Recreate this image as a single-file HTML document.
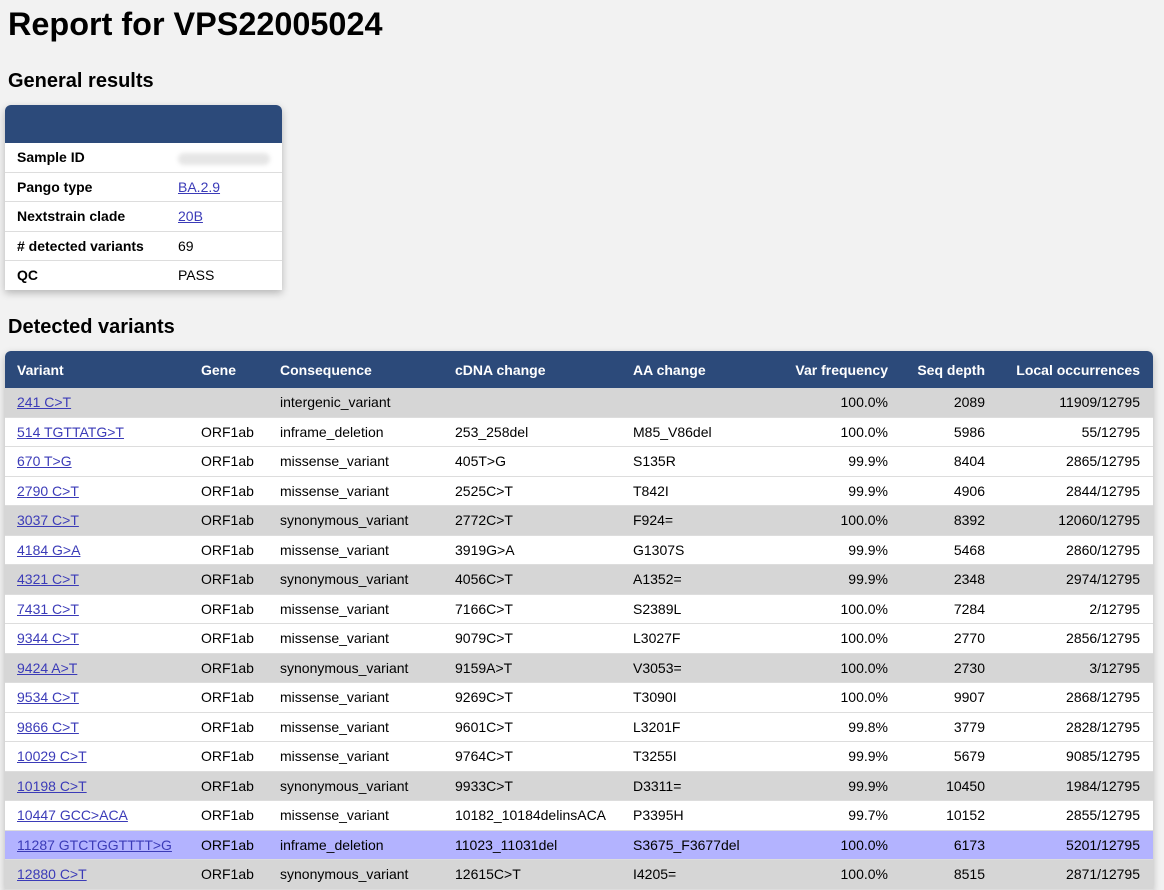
<!DOCTYPE html>
<html><head><meta charset="utf-8"><style>
body{margin:0;background:#f2f2f2;font-family:"Liberation Sans",Arial,sans-serif;font-size:14px;color:#000;width:1164px;height:872px;overflow:hidden}
h1{position:absolute;left:8px;top:6px;margin:0;font-size:32.4px;font-weight:bold}
h2{position:absolute;left:8px;margin:0;font-size:20px;font-weight:bold}
a{color:#3b3bb8}
.card{position:absolute;left:5px;top:105px;width:277px;background:#fff;border-radius:6px 6px 0 0;box-shadow:0 3px 8px rgba(0,0,0,.25);overflow:hidden}
.card .hd{height:38px;background:#2c4a7a}
.card table{border-collapse:collapse;width:100%}
.card td{height:28.5px;padding:0 0 0 12px;border-bottom:1px solid #ddd}
.card tr:last-child td{border-bottom:none}
.card td.k{font-weight:bold;width:149px}
.var{position:absolute;left:5px;top:351px;width:1148px;border-radius:6px 6px 0 0;overflow:hidden;box-shadow:0 3px 8px rgba(0,0,0,.25)}
.var table{border-collapse:collapse;width:100%;background:#fff}
.var th{background:#2c4a7a;color:#fff;height:37px;text-align:left;font-weight:bold;padding:0 0 0 12px}
.var td{height:28.5px;border-bottom:1px solid #ddd;padding:0 0 0 12px;white-space:nowrap}
.var .r{text-align:right;padding:0 13px 0 0}
.var th.r{text-align:right;padding:0 13px 0 0}
tr.g td{background:#d6d6d6}
tr.p td{background:#b3b3ff}
.blur{display:inline-block;width:92px;height:12px;background:#e6e6e6;border-radius:6px;filter:blur(2px);vertical-align:middle}
</style></head><body>
<h1>Report for VPS22005024</h1>
<h2 style="top:70px">General results</h2>
<div class="card"><div class="hd"></div><table>
<tr><td class="k">Sample ID</td><td><span class="blur"></span></td></tr>
<tr><td class="k">Pango type</td><td><a href="#">BA.2.9</a></td></tr>
<tr><td class="k">Nextstrain clade</td><td><a href="#">20B</a></td></tr>
<tr><td class="k"># detected variants</td><td>69</td></tr>
<tr><td class="k">QC</td><td>PASS</td></tr>
</table></div>
<h2 style="top:316px">Detected variants</h2>
<div class="var"><table>
<colgroup><col style="width:184px"><col style="width:79px"><col style="width:175px"><col style="width:178px"><col style="width:133px"><col style="width:147px"><col style="width:97px"><col></colgroup>
<tr><th>Variant</th><th>Gene</th><th>Consequence</th><th>cDNA change</th><th>AA change</th><th class="r">Var frequency</th><th class="r">Seq depth</th><th class="r">Local occurrences</th></tr>
<tr class="g"><td><a href="#">241 C&gt;T</a></td><td></td><td>intergenic_variant</td><td></td><td></td><td class="r">100.0%</td><td class="r">2089</td><td class="r">11909/12795</td></tr>
<tr><td><a href="#">514 TGTTATG&gt;T</a></td><td>ORF1ab</td><td>inframe_deletion</td><td>253_258del</td><td>M85_V86del</td><td class="r">100.0%</td><td class="r">5986</td><td class="r">55/12795</td></tr>
<tr><td><a href="#">670 T&gt;G</a></td><td>ORF1ab</td><td>missense_variant</td><td>405T&gt;G</td><td>S135R</td><td class="r">99.9%</td><td class="r">8404</td><td class="r">2865/12795</td></tr>
<tr><td><a href="#">2790 C&gt;T</a></td><td>ORF1ab</td><td>missense_variant</td><td>2525C&gt;T</td><td>T842I</td><td class="r">99.9%</td><td class="r">4906</td><td class="r">2844/12795</td></tr>
<tr class="g"><td><a href="#">3037 C&gt;T</a></td><td>ORF1ab</td><td>synonymous_variant</td><td>2772C&gt;T</td><td>F924=</td><td class="r">100.0%</td><td class="r">8392</td><td class="r">12060/12795</td></tr>
<tr><td><a href="#">4184 G&gt;A</a></td><td>ORF1ab</td><td>missense_variant</td><td>3919G&gt;A</td><td>G1307S</td><td class="r">99.9%</td><td class="r">5468</td><td class="r">2860/12795</td></tr>
<tr class="g"><td><a href="#">4321 C&gt;T</a></td><td>ORF1ab</td><td>synonymous_variant</td><td>4056C&gt;T</td><td>A1352=</td><td class="r">99.9%</td><td class="r">2348</td><td class="r">2974/12795</td></tr>
<tr><td><a href="#">7431 C&gt;T</a></td><td>ORF1ab</td><td>missense_variant</td><td>7166C&gt;T</td><td>S2389L</td><td class="r">100.0%</td><td class="r">7284</td><td class="r">2/12795</td></tr>
<tr><td><a href="#">9344 C&gt;T</a></td><td>ORF1ab</td><td>missense_variant</td><td>9079C&gt;T</td><td>L3027F</td><td class="r">100.0%</td><td class="r">2770</td><td class="r">2856/12795</td></tr>
<tr class="g"><td><a href="#">9424 A&gt;T</a></td><td>ORF1ab</td><td>synonymous_variant</td><td>9159A&gt;T</td><td>V3053=</td><td class="r">100.0%</td><td class="r">2730</td><td class="r">3/12795</td></tr>
<tr><td><a href="#">9534 C&gt;T</a></td><td>ORF1ab</td><td>missense_variant</td><td>9269C&gt;T</td><td>T3090I</td><td class="r">100.0%</td><td class="r">9907</td><td class="r">2868/12795</td></tr>
<tr><td><a href="#">9866 C&gt;T</a></td><td>ORF1ab</td><td>missense_variant</td><td>9601C&gt;T</td><td>L3201F</td><td class="r">99.8%</td><td class="r">3779</td><td class="r">2828/12795</td></tr>
<tr><td><a href="#">10029 C&gt;T</a></td><td>ORF1ab</td><td>missense_variant</td><td>9764C&gt;T</td><td>T3255I</td><td class="r">99.9%</td><td class="r">5679</td><td class="r">9085/12795</td></tr>
<tr class="g"><td><a href="#">10198 C&gt;T</a></td><td>ORF1ab</td><td>synonymous_variant</td><td>9933C&gt;T</td><td>D3311=</td><td class="r">99.9%</td><td class="r">10450</td><td class="r">1984/12795</td></tr>
<tr><td><a href="#">10447 GCC&gt;ACA</a></td><td>ORF1ab</td><td>missense_variant</td><td>10182_10184delinsACA</td><td>P3395H</td><td class="r">99.7%</td><td class="r">10152</td><td class="r">2855/12795</td></tr>
<tr class="p"><td><a href="#">11287 GTCTGGTTTT&gt;G</a></td><td>ORF1ab</td><td>inframe_deletion</td><td>11023_11031del</td><td>S3675_F3677del</td><td class="r">100.0%</td><td class="r">6173</td><td class="r">5201/12795</td></tr>
<tr class="g"><td><a href="#">12880 C&gt;T</a></td><td>ORF1ab</td><td>synonymous_variant</td><td>12615C&gt;T</td><td>I4205=</td><td class="r">100.0%</td><td class="r">8515</td><td class="r">2871/12795</td></tr>
</table></div>
</body></html>
